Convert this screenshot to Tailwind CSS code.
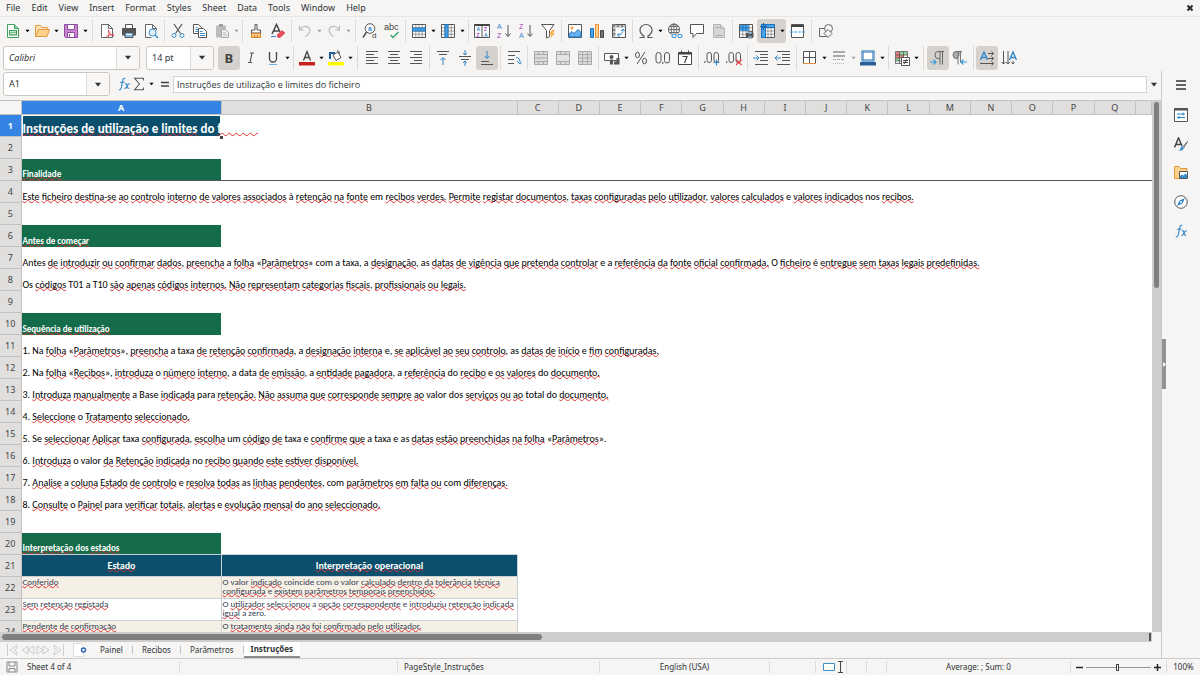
<!DOCTYPE html>
<html lang="pt-PT">
<head>
  <meta charset="UTF-8" />
  <title>Instruções - Calc</title>
  <meta name="viewport" content="width=device-width, initial-scale=1.0">
  <script src="https://cdn.jsdelivr.net/npm/@tailwindcss/browser@4"></script>
</head>
<body class="h-screen flex flex-col overflow-hidden bg-[#f6f5f4] text-[#2e3436] text-[9px] leading-3 font-['Noto_Sans',sans-serif]">

  <!-- Shared shapes -->
  <svg class="hidden">
    <symbol id="caret" viewBox="0 0 6 4"><path d="M0.5 0.5h5L3 3.5z" fill="currentColor"/></symbol>
    <symbol id="table" viewBox="0 0 16 16"><path d="M1 1.500h14v13H1z" fill="#fff"/><path d="M4.800 1.500v13M8 1.500v13M11.200 1.500v13M1.500 4.800h13M1.500 8h13M1.500 11.200h13" fill="none" stroke="#777" stroke-width=".7"/><path d="M1.500 1.500h13v13h-13z" fill="none" stroke="#555"/></symbol>
    <symbol id="fx" viewBox="0 0 16 16"><path d="M9.500 1.500C7.500 1 6.800 2.500 6.500 4.500L5 12c-.4 2-1.200 3-3 2.500M3.500 6h5M9 8c2-1 2 .5 2.500 2.500s1 3 2.500 2M14.500 8c-1.500-.5-2.500 1-3.200 2.500S9.500 13.500 8.500 13" fill="none" stroke="#2f86c8" stroke-width="1.300"/></symbol>
    <symbol id="merge" viewBox="0 0 16 16"><path d="M1.500 1.500h13v13h-13z" fill="#dcdcdc" stroke="#aaa"/><path d="M1.500 4.500h13M1.500 11.500h13M5.500 1.500v3M10.500 1.500v3M5.500 11.500v3M10.500 11.500v3M1.500 8h13" stroke="#aaa"/></symbol>
  </svg>

  <!-- Menu -->
  <header class="flex justify-between items-center h-[17px] border-b border-[#e6e5e3] px-1.5">
    <nav class="flex gap-[11px]">
      <button>File</button>
      <button>Edit</button>
      <button>View</button>
      <button>Insert</button>
      <button>Format</button>
      <button>Styles</button>
      <button>Sheet</button>
      <button>Data</button>
      <button>Tools</button>
      <button>Window</button>
      <button>Help</button>
    </nav>
    <button aria-label="Close"><svg class="size-2" viewBox="0 0 8 8"><path d="M1.500 1.500l5 5M6.500 1.500l-5 5" stroke="#222" stroke-width="1.800"/></svg></button>
  </header>

  <!-- Standard toolbar -->
  <div class="flex items-center h-[27px] pl-0.5 [&>button]:w-[22px] [&>button]:h-6 [&>button]:shrink-0 [&>button]:flex [&>button]:items-center [&>button]:justify-center [&_svg]:size-4 [&_svg]:overflow-visible [&_text]:font-['Liberation_Sans'] [&>.drop]:w-[7px] [&>.drop>svg]:w-[5px] [&>.drop>svg]:h-1 [&>.drop]:text-black [&>i]:w-px [&>i]:h-[22px] [&>i]:bg-[#dddbd9]" role="toolbar">
    <button aria-label="New"><svg viewBox="0 0 16 16"><path d="M2.500 1.500h7l4 4v9h-11z" fill="#fff" stroke="#3fa35b"/><path d="M9.500 1.500v4h4" fill="#8fd3a0" stroke="#3fa35b"/><path d="M4 7h8v5.500H4z" fill="#3fa35b"/><path d="M5 8.800h6M5 10.700h6" stroke="#fff"/></svg></button>
    <button class="drop" aria-label="New options"><svg><use href="#caret"/></svg></button>
    <button aria-label="Open"><svg viewBox="0 0 16 16"><path d="M1.500 13.500v-11h5l1.500 2h5.500v2" fill="#fce3b6" stroke="#e09a3e"/><path d="M1.500 13.500l3-7h11l-2.500 7z" fill="#fbd28b" stroke="#e09a3e"/></svg></button>
    <button class="drop" aria-label="Open options"><svg><use href="#caret"/></svg></button>
    <button aria-label="Save"><svg viewBox="0 0 16 16"><path d="M1.500 1.500h13v13h-12l-1-1z" fill="#c883d3" stroke="#8e4ca0"/><path d="M4.500 1.500h7v5h-7z" fill="#fff" stroke="#8e4ca0"/><path d="M4.500 9.500h7v5h-7z" fill="#fff" stroke="#8e4ca0"/><path d="M6.500 11v3" stroke="#8e4ca0"/></svg></button>
    <button class="drop" aria-label="Save options"><svg><use href="#caret"/></svg></button>
    <i class="mx-[3px]"></i>
    <button aria-label="Export as PDF"><svg viewBox="0 0 16 16"><path d="M2.500 1.500h7l4 4v9h-11z" fill="#fff" stroke="#666"/><path d="M9.500 1.500v4h4" fill="none" stroke="#666"/><path d="M9.500 7c.5 3 2 5 5.500 6M8 15c2-1 2.500-5 1.500-8M7.500 13.500c2-1.500 4-2 7.500-1.500" fill="none" stroke="#d94452"/></svg></button>
    <button aria-label="Print"><svg viewBox="0 0 16 16"><path d="M4.500 5v-3.500h7V5" fill="#fff" stroke="#555"/><path d="M1 5h14v7.500H1z" fill="#555"/><path d="M4 9.500h8v5H4z" fill="#7fb7e6" stroke="#555"/><path d="M5.500 11.500h5" stroke="#fff"/></svg></button>
    <button aria-label="Print Preview"><svg viewBox="0 0 16 16"><path d="M13.500 7V5.500l-4-4h-7v13h6" fill="#fff" stroke="#666"/><path d="M9.500 1.500v4h4" fill="none" stroke="#666"/><circle cx="9.500" cy="9.500" r="3.500" fill="#dceefb" stroke="#3a8fd0"/><path d="M12 12l3 3" stroke="#3a8fd0" stroke-width="1.500"/></svg></button>
    <i class="mx-0.5"></i>
    <button aria-label="Cut"><svg viewBox="0 0 16 16"><path d="M4 1l6.500 9.500M12 1L5.500 10.500" stroke="#555" stroke-width="1.200"/><circle cx="4" cy="12.500" r="2" fill="none" stroke="#3a8fd0"/><circle cx="12" cy="12.500" r="2" fill="none" stroke="#3a8fd0"/></svg></button>
    <button aria-label="Copy"><svg viewBox="0 0 16 16"><path d="M1.500 1.500h5l3 3v6h-8z" fill="#fff" stroke="#555"/><path d="M3.500 4.500h2M3.500 6.500h3M3.500 8.500h3" stroke="#3a8fd0"/><path d="M6.500 5.500h5l3 3v6h-8z" fill="#fff" stroke="#555"/><path d="M8 8.500h2.500M8 10.500h5M8 12.500h5" stroke="#3a8fd0"/></svg></button>
    <button aria-label="Paste"><svg viewBox="0 0 16 16"><path d="M2 2.500h10v12H2z" fill="#bbb"/><path d="M5 1h4v2.500H5z" fill="#999"/><path d="M7.500 6.500h4l3 3v5h-7z" fill="#eee" stroke="#aaa"/><path d="M9 10h3M9 12h4" stroke="#bbb"/></svg></button>
    <button class="drop opacity-35" aria-label="Paste options"><svg><use href="#caret"/></svg></button>
    <i class="mx-0.5"></i>
    <button aria-label="Clone Formatting"><svg viewBox="0 0 16 16"><path d="M7 1.500h2v5.500h3.500v3h-9V7H7z" fill="#fff" stroke="#555"/><path d="M3.500 10.500h9v4h-9z" fill="#fbd28b" stroke="#e07f1e"/><path d="M6.500 12v2.500M9.500 12v2.500" stroke="#e07f1e"/></svg></button>
    <button aria-label="Clear Direct Formatting"><svg viewBox="0 0 16 16"><path d="M2 11L6.500 1.500 10 9M3.700 8h5" fill="none" stroke="#444" stroke-width="1.500"/><path d="M1 13.500h5" stroke="#3a8fd0" stroke-width="1.200"/><path d="M7 12l5-4.500 3 2.500-5 4.500H8z" fill="#ea4b57" stroke="#d03543" stroke-width=".6"/></svg></button>
    <i class="mx-0.5"></i>
    <button aria-label="Undo"><svg viewBox="0 0 16 16"><path d="M2.500 2.500v4.500h4.500M2.500 7C5 3 9 2.500 11.500 4.500S13 11 8.500 13.500" fill="none" stroke="#bbb" stroke-width="1.200"/></svg></button>
    <button class="drop opacity-35" aria-label="Undo list"><svg><use href="#caret"/></svg></button>
    <button aria-label="Redo"><svg viewBox="0 0 16 16"><path d="M13.500 2.500v4.500H9M13.500 7C11 3 7 2.500 4.500 4.500S3 11 7.500 13.500" fill="none" stroke="#bbb" stroke-width="1.200"/></svg></button>
    <button class="drop opacity-35" aria-label="Redo list"><svg><use href="#caret"/></svg></button>
    <i class="mx-[3px]"></i>
    <button aria-label="Find and Replace"><svg viewBox="0 0 16 16"><circle cx="8" cy="5.500" r="4.800" fill="#fff" stroke="#555"/><path d="M4.500 9L1 14.500" stroke="#555" stroke-width="1.500"/><text x="6" y="8" font-size="7" font-weight="bold" fill="#3a8fd0">a</text><text x="10" y="15" font-size="8" fill="#444">d</text></svg></button>
    <button aria-label="Spelling"><svg viewBox="0 0 16 16"><text x="0" y="7" font-size="9" fill="#444">abc</text><path d="M6.500 12l2.500 2.500L14.500 9" fill="none" stroke="#2fa56a" stroke-width="1.300"/></svg></button>
    <i class="mx-0.5"></i>
    <button aria-label="Row"><svg viewBox="0 0 16 16"><use href="#table"/><path d="M1.500 5h13v3h-13z" fill="#4aa3e8" stroke="#1b74bd"/></svg></button>
    <button class="drop" aria-label="Row options"><svg><use href="#caret"/></svg></button>
    <button aria-label="Column"><svg viewBox="0 0 16 16"><use href="#table"/><path d="M5 1.500h3v13H5z" fill="#4aa3e8" stroke="#1b74bd"/></svg></button>
    <button class="drop" aria-label="Column options"><svg><use href="#caret"/></svg></button>
    <i class="mx-0.5"></i>
    <button aria-label="Sort"><svg viewBox="0 0 16 16"><path d="M.5 1.500h15v13H.5zM8 2v12.500" fill="#fff" stroke="#555"/><path d="M.5 2h15" stroke="#444" stroke-width="2"/><g font-size="5" font-weight="bold"><text x="2.500" y="8" fill="#2f86c8">A</text><text x="2.500" y="14" fill="#a342b8">Z</text><text x="10" y="8" fill="#a342b8">Z</text><text x="10" y="14" fill="#2f86c8">A</text></g></svg></button>
    <button aria-label="Sort Ascending"><svg viewBox="0 0 16 16"><text x="1" y="6" font-size="7" fill="#2f86c8">A</text><text x="1" y="15" font-size="7" fill="#a342b8">Z</text><path d="M12 2v11M9.500 10.500l2.500 3 2.500-3" fill="none" stroke="#555"/></svg></button>
    <button aria-label="Sort Descending"><svg viewBox="0 0 16 16"><text x="1" y="6" font-size="7" fill="#a342b8">Z</text><text x="1" y="15" font-size="7" fill="#2f86c8">A</text><path d="M12 2v11M9.500 10.500l2.500 3 2.500-3" fill="none" stroke="#555"/></svg></button>
    <button aria-label="AutoFilter"><svg viewBox="0 0 16 16"><path d="M1.500 1.500h12.500l-4.500 6v6l-3 1.500V7.500z" fill="#fff" stroke="#555"/><path d="M12 7l-3 4.500h2.500L10 15.500l5-5.500h-2.500L15 7z" fill="#f7ac45"/></svg></button>
    <i class="mx-0.5"></i>
    <button aria-label="Insert Image"><svg viewBox="0 0 16 16"><path d="M1.500 1.500h13v13h-13z" fill="#fff" stroke="#555"/><circle cx="5" cy="5" r="1.500" fill="#f2a13a"/><path d="M2 14V11l3-2.500 2 2L11 6.500 14 9.500V14z" fill="#69b1ec" stroke="#1b74bd"/></svg></button>
    <button aria-label="Insert Chart"><svg viewBox="0 0 16 16"><path d="M1.500 5.500h3v9h-3z" fill="#4aa3e8" stroke="#1b74bd"/><path d="M6.500 1.500h3v13h-3z" fill="#fbd28b" stroke="#e8913a"/><path d="M11.500 7.500h3v7h-3z" fill="#777" stroke="#444"/></svg></button>
    <button aria-label="Insert Pivot Table"><svg viewBox="0 0 16 16"><path d="M1.500 1.500h13v13h-13z" fill="#fff" stroke="#555"/><path d="M1.500 3.200h13M3.200 1.500v13" stroke="#888" stroke-width="2.500" stroke-dasharray="3 1"/><path d="M6.500 12c4 0 5.500-2 5.500-6M10 8l2-2 2 2M8.500 10l-2 2 2 2" fill="none" stroke="#2f86c8"/></svg></button>
    <i class="mx-0.5"></i>
    <button aria-label="Special Character"><svg viewBox="0 0 16 16"><path d="M1.500 14.500h4.500v-1.500C3.500 11.500 2 9.500 2 7a6 5.500 0 0 1 12 0c0 2.500-1.500 4.500-4 6v1.500h4.500" fill="none" stroke="#555" stroke-width="1.200"/></svg></button>
    <button class="drop" aria-label="Symbols"><svg><use href="#caret"/></svg></button>
    <button aria-label="Hyperlink"><svg viewBox="0 0 16 16"><circle cx="7" cy="6.500" r="5.500" fill="none" stroke="#555"/><path d="M1.500 6.500h11M7 1v11M2.500 3.500h9M2.500 9.500h9" stroke="#555" stroke-width=".8"/><ellipse cx="7" cy="6.500" rx="2.700" ry="5.500" fill="none" stroke="#555" stroke-width=".8"/><path d="M4.500 10.500h5v4h-5zM10.500 10.500h5v4h-5z" fill="#f6f5f4"/><path d="M9 11.500H6.500a1.500 1.500 0 0 0 0 3H9M11 11.500h2.500a1.500 1.500 0 0 1 0 3H11M8 13h4" fill="none" stroke="#3a9ae0" stroke-width="1.200"/></svg></button>
    <button aria-label="Comment"><svg viewBox="0 0 16 16"><path d="M1.500 1.500h13v9h-7L4 14.500v-4H1.500z" fill="#fff" stroke="#555"/></svg></button>
    <button aria-label="Headers and Footers"><svg viewBox="0 0 16 16"><path d="M2.500 1.500h7l4 4v9h-11z" fill="#d6d6d6" stroke="#b5b5b5"/><path d="M9.500 1.500v4h4" fill="none" stroke="#b5b5b5"/><path d="M4.500 4.500h4M4.500 12.500h7" stroke="#aaa"/></svg></button>
    <i class="mx-0.5"></i>
    <button aria-label="Print Area"><svg viewBox="0 0 16 16"><use href="#table"/><path d="M2 2h9v6H2z" fill="#4aa3e8"/><path d="M5 2v6M8 2v6M2 5h9" stroke="#1b74bd"/><path d="M8 10h7.500v4.500H8z" fill="#555"/><path d="M10 8.500h4V11h-4zM10 13h4v2h-4z" fill="#9bc9ef" stroke="#555" stroke-width=".7"/></svg></button>
    <button class="bg-[#d5d2ce] rounded-l-[3px]" aria-label="Freeze Rows and Columns"><svg viewBox="0 0 16 16"><use href="#table"/><path d="M1.500 1.500h13v3h-13zM1.500 1.500h4v13h-4z" fill="#4aa3e8" stroke="#1b74bd"/><path d="M3.500 0v7M0 3.500h7" stroke="#1666a8"/></svg></button>
    <button class="drop bg-[#d5d2ce] rounded-r-[3px]" aria-label="Freeze options"><svg><use href="#caret"/></svg></button>
    <button aria-label="Split Window"><svg viewBox="0 0 16 16"><path d="M2.500 1.500h12v13h-12z" fill="#fff" stroke="#555"/><path d="M2 2h13v2H2z" fill="#444"/><path d="M1 9h15" stroke="#3a9ae0" stroke-dasharray="3 1"/></svg></button>
    <i class="mx-[3px]"></i>
    <button aria-label="Show Draw Functions"><svg viewBox="0 0 16 16"><path d="M1.500 5.500h8v8h-8z" fill="none" stroke="#666"/><circle cx="10.500" cy="5.500" r="4" fill="#f6f5f4" stroke="#666"/><path d="M10 6.500l4 4-4 4-4-4z" fill="#f6f5f4" stroke="#666"/></svg></button>
  </div>

  <!-- Formatting toolbar -->
  <div class="flex items-center h-[27px] pl-[3px] [&>button]:w-[22px] [&>button]:h-6 [&>button]:shrink-0 [&>button]:flex [&>button]:items-center [&>button]:justify-center [&>button>svg]:size-4 [&>.drop]:w-[7px] [&>.drop>svg]:w-[5px] [&>.drop>svg]:h-1 [&>.drop]:text-black [&>i]:w-px [&>i]:h-6 [&>i]:bg-[#dddbd9]" role="toolbar">
    <div class="flex w-[137px] h-6 mr-1.5 bg-white border border-[#cdc7c2] rounded-[3px]">
      <input class="min-w-0 flex-1 pl-[5px] italic" value="Calibri" aria-label="Font Name">
      <button class="w-[23px] flex items-center justify-center border-l border-[#dcd9d6] bg-[#f8f7f6] rounded-r-[3px]" aria-label="Font list"><svg class="w-2 h-[5px]"><use href="#caret"/></svg></button>
    </div>
    <div class="flex w-[68px] h-6 mr-1 bg-white border border-[#cdc7c2] rounded-[3px]">
      <input class="min-w-0 flex-1 pl-[5px]" value="14 pt" aria-label="Font Size">
      <button class="w-[23px] flex items-center justify-center border-l border-[#dcd9d6] bg-[#f8f7f6] rounded-r-[3px]" aria-label="Size list"><svg class="w-2 h-[5px]"><use href="#caret"/></svg></button>
    </div>
    <button class="bg-[#d5d2ce] rounded-[3px]" aria-label="Bold"><svg viewBox="0 0 16 16"><text x="3.500" y="12.500" font-size="13" font-weight="bold" fill="#444">B</text></svg></button>
    <button aria-label="Italic"><svg viewBox="0 0 16 16"><path d="M7 3h4M5 12.500h4M9 3L7 12.500" stroke="#555" stroke-width="1.200"/></svg></button>
    <button aria-label="Underline"><svg viewBox="0 0 16 16"><path d="M4.500 2v6.500a3.500 3.500 0 0 0 7 0V2" fill="none" stroke="#444" stroke-width="1.300"/><path d="M4 14.500h8" stroke="#6cb0e6"/></svg></button>
    <button class="drop" aria-label="Underline styles"><svg><use href="#caret"/></svg></button>
    <i class="mx-0.5"></i>
    <button aria-label="Font Color"><svg viewBox="0 0 16 16"><path d="M4.500 10.500L8 1.500l3.500 9M5.700 7.500h4.600" fill="none" stroke="#444" stroke-width="1.300"/><path d="M0 12h16v3.500H0z" fill="#c9211e"/></svg></button>
    <button class="drop" aria-label="Font colors"><svg><use href="#caret"/></svg></button>
    <button aria-label="Background Color"><svg viewBox="0 0 16 16"><path d="M5 5l5-3 3 5.500-5 3z" fill="#fff" stroke="#555"/><path d="M2 9V3h5" fill="none" stroke="#1b5f9e" stroke-width="2"/><path d="M9 1.500c1-1.500 3-.5 2 2.500" fill="none" stroke="#555"/><path d="M0 12h16v3.500H0z" fill="#ff0"/></svg></button>
    <button class="drop" aria-label="Background colors"><svg><use href="#caret"/></svg></button>
    <i class="mx-[3px]"></i>
    <button aria-label="Align Left"><svg viewBox="0 0 16 16"><path d="M2 1.500h12M2 4.500h8M2 7.500h12M2 10.500h8M2 13.500h12" stroke="#555"/></svg></button>
    <button aria-label="Center Horizontally"><svg viewBox="0 0 16 16"><path d="M2 1.500h12M4 4.500h8M2 7.500h12M4 10.500h8M2 13.500h12" stroke="#555"/></svg></button>
    <button aria-label="Align Right"><svg viewBox="0 0 16 16"><path d="M2 1.500h12M6 4.500h8M2 7.500h12M6 10.500h8M2 13.500h12" stroke="#555"/></svg></button>
    <i class="mx-0.5"></i>
    <button aria-label="Align Top"><svg viewBox="0 0 16 16"><path d="M2 1.500h12M4 4.500h8" stroke="#555"/><path d="M8 15V8M5.500 10L8 7.500 10.500 10" fill="none" stroke="#2f86c8"/></svg></button>
    <button aria-label="Center Vertically"><svg viewBox="0 0 16 16"><path d="M2 6.500h12M4 9.500h8" stroke="#555"/><path d="M8 0v5M6 3l2 2 2-2M8 16v-5M6 13l2-2 2 2" fill="none" stroke="#2f86c8"/></svg></button>
    <button class="bg-[#d5d2ce] rounded-[3px]" aria-label="Align Bottom"><svg viewBox="0 0 16 16"><path d="M2 11.500h8M2 14.500h12" stroke="#555"/><path d="M8 1v7M5.500 6L8 8.500 10.500 6" fill="none" stroke="#2f86c8"/></svg></button>
    <i class="mx-0.5"></i>
    <button aria-label="Wrap Text"><svg viewBox="0 0 16 16"><path d="M2 1.500h12M2 5.500h7M2 9.500h6M2 13.500h6" stroke="#555"/><path d="M10 7.500c2.500 0 4 1.500 4 4.500M11 11l3 3 2-2.500" fill="none" stroke="#2f86c8"/></svg></button>
    <i class="mx-0.5"></i>
    <button aria-label="Merge and Center"><svg><use href="#merge"/></svg></button>
    <button aria-label="Merge Cells"><svg viewBox="0 0 16 16"><use href="#merge"/><path d="M2 5h12v6H2z" fill="#e4e4e4"/></svg></button>
    <button aria-label="Unmerge Cells"><svg viewBox="0 0 16 16"><use href="#merge"/><path d="M5.500 4.500v7M10.500 4.500v7" stroke="#aaa"/></svg></button>
    <i class="mx-0.5"></i>
    <button aria-label="Format as Currency"><svg viewBox="0 0 16 16"><path d="M.5 3.500h14v7H.5z" fill="#fff" stroke="#555"/><circle cx="7.500" cy="7" r="2" fill="#555"/><path d="M6 9.500h3v5H6zM10 11.500h3v3h-3zM12.500 8h3v6.500h-3z" fill="#555"/></svg></button>
    <button class="drop" aria-label="Currency list"><svg><use href="#caret"/></svg></button>
    <button aria-label="Format as Percent"><svg viewBox="0 0 16 16"><path d="M12 2L4 14" stroke="#555"/><ellipse cx="4.500" cy="5" rx="2" ry="2.800" fill="none" stroke="#555"/><ellipse cx="11.500" cy="11" rx="2" ry="2.800" fill="none" stroke="#555"/></svg></button>
    <button aria-label="Format as Number"><svg viewBox="0 0 16 16"><rect x="1" y="2.500" width="5" height="10.500" rx="2.500" fill="none" stroke="#555"/><rect x="9.500" y="2.500" width="5" height="10.500" rx="2.500" fill="none" stroke="#555"/><path d="M7.800 12v2" stroke="#555"/></svg></button>
    <button aria-label="Format as Date"><svg viewBox="0 0 16 16"><path d="M1.500 2.500h13v12h-13z" fill="#fff" stroke="#444"/><path d="M1.500 3.500h13" stroke="#444" stroke-width="2"/><path d="M4.500 .5v2M11.500 .5v2" stroke="#444"/><path d="M5.500 6.500h4.500L7.500 13" fill="none" stroke="#444" stroke-width="1.200"/></svg></button>
    <i class="mx-0.5"></i>
    <button aria-label="Add Decimal Place"><svg viewBox="0 0 16 16"><path d="M.8 11v2" stroke="#555"/><rect x="3" y="2.500" width="4.500" height="10" rx="2.200" fill="none" stroke="#555"/><rect x="10" y="2.500" width="4.500" height="10" rx="2.200" fill="none" stroke="#555"/><path d="M9.500 12.500h6M12.500 9.500v6" stroke="#2f86c8" stroke-width="1.200"/></svg></button>
    <button aria-label="Delete Decimal Place"><svg viewBox="0 0 16 16"><path d="M.8 11v2" stroke="#555"/><rect x="3" y="2.500" width="4.500" height="10" rx="2.200" fill="none" stroke="#555"/><rect x="10" y="2.500" width="4.500" height="10" rx="2.200" fill="none" stroke="#555"/><path d="M10 9.500l5.500 5.500M15.500 9.500L10 15" stroke="#e0424d" stroke-width="1.200"/></svg></button>
    <i class="mx-0.5"></i>
    <button aria-label="Increase Indent"><svg viewBox="0 0 16 16"><path d="M2 1.500h13M7 4.500h8M7 7.500h8M7 10.500h8M2 14.500h13" stroke="#555"/><path d="M0 8h6M3.500 5.500L6 8l-2.500 2.500" fill="none" stroke="#2f86c8"/></svg></button>
    <button aria-label="Decrease Indent"><svg viewBox="0 0 16 16"><path d="M2 1.500h13M7 4.500h8M7 7.500h8M7 10.500h8M2 14.500h13" stroke="#555"/><path d="M6 8H0M2.500 5.500L0 8l2.500 2.500" fill="none" stroke="#2f86c8"/></svg></button>
    <i class="mx-0.5"></i>
    <button aria-label="Borders"><svg viewBox="0 0 16 16"><path d="M1.500 1.500h12v12h-12zM7.500 1.500v12M1.500 7.500h12" fill="#fff" stroke="#555"/><path d="M1 13.500h13" stroke="#e8913a"/></svg></button>
    <button class="drop" aria-label="Border list"><svg><use href="#caret"/></svg></button>
    <button aria-label="Border Style"><svg viewBox="0 0 16 16"><path d="M2 2h12M2 6h12" stroke="#aaa" stroke-width="2"/><path d="M2 9.500h12" stroke="#aaa" stroke-dasharray="3 1"/><path d="M2 13.500h12" stroke="#bbb" stroke-dasharray="1 1"/></svg></button>
    <button class="drop opacity-35" aria-label="Border styles"><svg><use href="#caret"/></svg></button>
    <button aria-label="Border Color"><svg viewBox="0 0 16 16"><path d="M2.500 1.500h11v9h-11z" fill="#fff" stroke="#2a6099" stroke-width="2"/><path d="M2.500 1.500h11v9h-11z" fill="none" stroke="#6ab0e8"/><path d="M0 12h16v3.500H0z" fill="#2a6099"/></svg></button>
    <button class="drop" aria-label="Border colors"><svg><use href="#caret"/></svg></button>
    <i class="mx-0.5"></i>
    <button aria-label="Conditional Formatting"><svg viewBox="0 0 16 16"><path d="M1.500 1.500h12v12h-12z" fill="#fff"/><path d="M2 2h4v3H2zM2 5h8v3H2z" fill="#ee7a7f"/><path d="M6 2h7v3H6zM2 8h4v3H2z" fill="#8ed69c"/><path d="M1.500 1.500h12v12h-12zM5.500 1.500v12M9.500 1.500v12M1.500 5h12M1.500 8h12M1.500 11h12" fill="none" stroke="#555" stroke-width=".8"/><path d="M7.500 7.500h8v8h-8z" fill="#fff" stroke="#555"/><path d="M9 10.500h5M9 12.500h5M13 9l-3 5" stroke="#444"/></svg></button>
    <button class="drop" aria-label="Conditional list"><svg><use href="#caret"/></svg></button>
    <i class="mx-[3px]"></i>
    <button class="bg-[#d5d2ce] rounded-[3px]" aria-label="Left-To-Right"><svg viewBox="0 0 16 16"><path d="M14 1.500H8a3 3.500 0 0 0 0 7h2M10 1.500v13M12.500 1.500v13" fill="none" stroke="#666"/><path d="M0 12h6M3.500 9.500L6 12l-2.500 2.500" fill="none" stroke="#3a9ae0" stroke-width="1.200"/></svg></button>
    <button aria-label="Right-To-Left"><svg viewBox="0 0 16 16"><path d="M10 1.500H4a3 3.500 0 0 0 0 7h2z" fill="#aaa"/><path d="M10 1.500H4a3 3.500 0 0 0 0 7h2M6 1.500v13M8.500 1.500v11" fill="none" stroke="#777"/><path d="M15 12H9M11.500 9.500L9 12l2.500 2.500" fill="none" stroke="#3a9ae0" stroke-width="1.200"/></svg></button>
    <i class="mx-0.5"></i>
    <button class="bg-[#d5d2ce] rounded-[3px]" aria-label="Text left to right"><svg viewBox="0 0 16 16"><path d="M1.500 10L5 2l3.500 8M2.700 7.500h4.600" fill="none" stroke="#2f86c8" stroke-width="1.400"/><path d="M9 3.500h5M12.500 1.500l2 2-2 2M9 8.500h5M12.500 6.500l2 2-2 2M1 13.500h13M12.500 11.500l2 2-2 2" fill="none" stroke="#555"/></svg></button>
    <button aria-label="Text top to bottom"><svg viewBox="0 0 16 16"><path d="M8.500 10L12 2l3.500 8M9.700 7.500h4.600" fill="none" stroke="#2f86c8" stroke-width="1.400"/><path d="M2.500 1v13M.5 12l2 2 2-2M7 1v13M5 12l2 2 2-2M12 11v3M10.500 12.500l1.500 1.500 1.500-1.500" fill="none" stroke="#555"/></svg></button>
  </div>

  <div class="flex flex-1 min-h-0">
    <div class="flex flex-col flex-1 min-w-0">

      <!-- Formula bar -->
      <div class="flex items-center h-[26px] mb-[3px] pl-[3px]">
        <div class="flex w-[107px] h-6 bg-white border border-[#cdc7c2] rounded-[3px]">
          <input class="min-w-0 flex-1 pl-[5px]" value="A1" aria-label="Name Box">
          <button class="w-[23px] flex items-center justify-center border-l border-[#dcd9d6] bg-[#f8f7f6] rounded-r-[3px]" aria-label="Names"><svg class="w-2 h-[5px]"><use href="#caret"/></svg></button>
        </div>
        <button class="ml-[7px]" aria-label="Function Wizard"><svg class="size-[14px]"><use href="#fx"/></svg></button>
        <button class="ml-[1px]" aria-label="Select Function"><svg class="size-[14px]" viewBox="0 0 16 16"><path d="M13 4V1.500H3L8.500 8 3 14.500h10V12" fill="none" stroke="#555" stroke-width="1.200"/></svg></button>
        <button class="w-[11px] flex justify-center text-black" aria-label="Functions"><svg class="w-[5px] h-1"><use href="#caret"/></svg></button>
        <button class="px-[3px]" aria-label="Formula"><svg class="w-[10px] h-2" viewBox="0 0 10 8"><path d="M1 2.500h8M1 6h8" stroke="#444" stroke-width="1.400"/></svg></button>
        <input class="flex-1 min-w-0 h-[17px] bg-white border border-[#d5d2cf] px-[3px] font-['Open_Sans',sans-serif]" value="Instruções de utilização e limites do ficheiro" aria-label="Formula input">
        <button class="w-[14px] flex justify-center" aria-label="Expand Formula Bar"><svg class="w-2 h-[5px]"><use href="#caret"/></svg></button>
      </div>

      <!-- Sheet -->
      <div class="flex flex-1 min-h-0">
        <div class="flex-1 min-w-0 overflow-hidden bg-white">
          <table class="w-full table-fixed border-collapse [&_tr]:h-[22px] [&_td]:p-0 [&_td]:pl-px [&_td]:align-bottom [&_td]:whitespace-nowrap [&_td]:font-[Carlito,Lato,sans-serif] [&_td]:text-[10px] [&_td]:text-black [&_th]:text-[#444] [&_tbody_th]:p-0 [&_tbody_th]:font-normal [&_tbody_th]:bg-[#e0dfde] [&_tbody_th]:border-r [&_tbody_th]:border-b [&_tbody_th]:border-[#c4c2c0] [&_u]:decoration-wavy [&_u]:decoration-[#e03030] [&_u]:decoration-1 [&_u]:[text-decoration-skip-ink:none] [&_u]:-underline-offset-1">
            <colgroup>
              <col class="w-[21px]"><col class="w-[200px]"><col class="w-[296px]">
              <col span="15"><col class="w-4">
            </colgroup>
            <thead>
              <tr class="h-[14px]! [&>th]:p-0 [&>th]:h-[14px] [&>th]:font-normal [&>th]:leading-3 [&>th]:bg-[#e0dfde] [&>th]:border-r [&>th]:border-y [&>th]:border-[#c4c2c0]">
                <th class="bg-[#f6f5f4]!"></th>
                <th class="bg-[#3584e4]! text-white! font-bold!">A</th><th>B</th><th>C</th><th>D</th><th>E</th><th>F</th><th>G</th><th>H</th><th>I</th><th>J</th><th>K</th><th>L</th><th>M</th><th>N</th><th>O</th><th>P</th><th>Q</th><th></th>
              </tr>
            </thead>
            <tbody>
              <tr>
                <th class="bg-[#3584e4]! text-white! font-bold!">1</th>
                <td class="bg-[#0b4f6c] text-white! text-[13px]! font-bold leading-4 relative shadow-[1px_1px_0_#444,inset_0_0_0_1px_#fff]"><u>Instruções</u> <u>de</u> <u>utilização</u> e <u>limites</u> do <u>ficheiro</u><span class="absolute -right-0.5 -bottom-0.5 size-[3px] bg-[#444]"></span></td>
              </tr>
              <tr><th>2</th></tr>
              <tr class="border-b border-[#555]"><th>3</th><td class="bg-[#146c4a] text-white! text-[9px]! font-bold"><u>Finalidade</u></td></tr>
              <tr><th>4</th><td><u>Este</u> <u>ficheiro</u> <u>destina-se</u> <u>ao</u> <u>controlo</u> <u>interno</u> <u>de</u> <u>valores</u> <u>associados</u> à <u>retenção</u> <u>na</u> <u>fonte</u> em <u>recibos</u> <u>verdes.</u> <u>Permite</u> <u>registar</u> <u>documentos</u>, <u>taxas</u> <u>configuradas</u> <u>pelo</u> <u>utilizador</u>, <u>valores</u> <u>calculados</u> e <u>valores</u> <u>indicados</u> nos <u>recibos.</u></td></tr>
              <tr><th>5</th></tr>
              <tr><th>6</th><td class="bg-[#146c4a] text-white! text-[9px]! font-bold"><u>Antes</u> de <u>começar</u></td></tr>
              <tr><th>7</th><td>Antes <u>de</u> <u>introduzir</u> <u>ou</u> <u>confirmar</u> <u>dados</u>, <u>preencha</u> a <u>folha</u> «<u>Parâmetros</u>» com a taxa, a <u>designação</u>, as <u>datas</u> <u>de</u> <u>vigência</u> <u>que</u> <u>pretenda</u> <u>controlar</u> e a <u>referência</u> <u>da</u> <u>fonte</u> <u>oficial</u> <u>confirmada.</u> O <u>ficheiro</u> é <u>entregue</u> <u>sem</u> <u>taxas</u> <u>legais</u> <u>predefinidas.</u></td></tr>
              <tr><th>8</th><td>Os <u>códigos</u> T01 a T10 <u>são</u> <u>apenas</u> <u>códigos</u> <u>internos.</u> <u>Não</u> <u>representam</u> <u>categorias</u> <u>fiscais</u>, <u>profissionais</u> <u>ou</u> <u>legais.</u></td></tr>
              <tr><th>9</th></tr>
              <tr><th>10</th><td class="bg-[#146c4a] text-white! text-[9px]! font-bold"><u>Sequência</u> <u>de</u> <u>utilização</u></td></tr>
              <tr><th>11</th><td>1. Na <u>folha</u> «<u>Parâmetros</u>», <u>preencha</u> a taxa <u>de</u> <u>retenção</u> <u>confirmada</u>, a <u>designação</u> <u>interna</u> e, <u>se</u> <u>aplicável</u> <u>ao</u> <u>seu</u> <u>controlo</u>, as <u>datas</u> <u>de</u> <u>início</u> e <u>fim</u> <u>configuradas.</u></td></tr>
              <tr><th>12</th><td>2. Na <u>folha</u> «<u>Recibos</u>», <u>introduza</u> o <u>número</u> <u>interno</u>, a data <u>de</u> <u>emissão</u>, a <u>entidade</u> <u>pagadora</u>, a <u>referência</u> do <u>recibo</u> e <u>os</u> <u>valores</u> do <u>documento.</u></td></tr>
              <tr><th>13</th><td>3. <u>Introduza</u> <u>manualmente</u> a Base <u>indicada</u> para <u>retenção.</u> <u>Não</u> <u>assuma</u> <u>que</u> <u>corresponde</u> <u>sempre</u> <u>ao</u> valor dos <u>serviços</u> <u>ou</u> <u>ao</u> total do <u>documento.</u></td></tr>
              <tr><th>14</th><td>4. <u>Seleccione</u> o <u>Tratamento</u> <u>seleccionado.</u></td></tr>
              <tr><th>15</th><td>5. Se <u>seleccionar</u> <u>Aplicar</u> taxa <u>configurada</u>, <u>escolha</u> um <u>código</u> <u>de</u> taxa e <u>confirme</u> <u>que</u> a taxa e as <u>datas</u> <u>estão</u> <u>preenchidas</u> <u>na</u> <u>folha</u> «<u>Parâmetros</u>».</td></tr>
              <tr><th>16</th><td>6. <u>Introduza</u> o valor <u>da</u> <u>Retenção</u> <u>indicada</u> no <u>recibo</u> <u>quando</u> <u>este</u> <u>estiver</u> <u>disponível.</u></td></tr>
              <tr><th>17</th><td>7. <u>Analise</u> a <u>coluna</u> <u>Estado</u> <u>de</u> <u>controlo</u> e <u>resolva</u> <u>todas</u> as <u>linhas</u> <u>pendentes</u>, com <u>parâmetros</u> <u>em</u> <u>falta</u> <u>ou</u> com <u>diferenças.</u></td></tr>
              <tr><th>18</th><td>8. <u>Consulte</u> o <u>Painel</u> para <u>verificar</u> <u>totais</u>, <u>alertas</u> e <u>evolução</u> <u>mensal</u> do <u>ano</u> <u>seleccionado.</u></td></tr>
              <tr><th>19</th></tr>
              <tr><th>20</th><td class="bg-[#146c4a] text-white! text-[9px]! font-bold"><u>Interpretação</u> dos <u>estados</u></td></tr>
              <tr class="[&>td]:bg-[#0b4f6c] [&>td]:border [&>td]:border-[#c9d1d6] [&>td]:text-white! [&>td]:font-bold [&>td]:text-center [&>td]:align-middle!"><th>21</th><td><u>Estado</u></td><td><u>Interpretação</u> <u>operacional</u></td></tr>
              <tr class="[&>td]:bg-[#f5f0e6] [&>td]:border [&>td]:border-[#c9d1d6] [&>td]:text-[#374151]! [&>td]:text-[9px]! [&>td]:leading-[9px] [&>td]:align-top! [&>td]:whitespace-normal!"><th>22</th><td><u>Conferido</u></td><td>O valor <u>indicado</u> coincide com o valor <u>calculado</u> <u>dentro</u> <u>da</u> <u>tolerância</u> <u>técnica</u> <u>configurada</u> e <u>existem</u> <u>parâmetros</u> <u>temporais</u> <u>preenchidos.</u></td></tr>
              <tr class="[&>td]:border [&>td]:border-[#c9d1d6] [&>td]:text-[#374151]! [&>td]:text-[9px]! [&>td]:leading-[9px] [&>td]:align-top! [&>td]:whitespace-normal!"><th>23</th><td><u>Sem</u> <u>retenção</u> <u>registada</u></td><td>O <u>utilizador</u> <u>seleccionou</u> a <u>opção</u> <u>correspondente</u> e <u>introduziu</u> <u>retenção</u> <u>indicada</u> <u>igual</u> a zero.</td></tr>
              <tr class="[&>td]:bg-[#f5f0e6] [&>td]:border [&>td]:border-[#c9d1d6] [&>td]:text-[#374151]! [&>td]:text-[9px]! [&>td]:leading-[9px] [&>td]:align-top! [&>td]:whitespace-normal!"><th>24</th><td><u>Pendente</u> <u>de</u> <u>confirmação</u></td><td>O <u>tratamento</u> <u>ainda</u> <u>não</u> <u>foi</u> <u>confirmado</u> <u>pelo</u> <u>utilizador.</u></td></tr>
            </tbody>
          </table>
        </div>
        <div class="w-[9px] bg-[#cdcdcd] pt-0.5 px-0.5"><div class="w-[5px] h-[35%] bg-[#7f7f7f] rounded-full"></div></div>
      </div>

      <!-- Horizontal scroll and sheet tabs -->
      <div class="flex items-center h-[10px] mr-[9px] bg-[#cdcdcd] pl-0.5 pr-px justify-between">
        <div class="w-[47%] h-1.5 bg-[#7f7f7f] rounded-full"></div>
        <div class="w-0.5 h-2 bg-[#555]"></div>
      </div>
      <div class="flex items-stretch h-4 text-[8px] leading-[14px]">
        <div class="flex items-center gap-px pl-1.5 text-[#cfcdcb]">
          <button aria-label="First sheet"><svg class="w-[14px] h-3" viewBox="0 0 14 12"><path d="M1.500 0v12M11 1L4 6l7 5V8L8 6l3-2z" fill="none" stroke="currentColor"/></svg></button>
          <button aria-label="Previous sheet"><svg class="w-[14px] h-3" viewBox="0 0 14 12"><path d="M7 2L1 6l6 4zM13 2L7 6l6 4z" fill="none" stroke="currentColor"/></svg></button>
          <button aria-label="Next sheet"><svg class="w-[14px] h-3" viewBox="0 0 14 12"><path d="M1 2l6 4-6 4zM7 2l6 4-6 4z" fill="none" stroke="currentColor"/></svg></button>
          <button aria-label="Last sheet"><svg class="w-[14px] h-3" viewBox="0 0 14 12"><path d="M12.500 0v12M3 1l7 5-7 5V8l3-2-3-2z" fill="none" stroke="currentColor"/></svg></button>
        </div>
        <button class="ml-2 mr-1" aria-label="Add sheet"><svg class="w-[14px] h-[14px]" viewBox="0 0 14 14"><path d="M.5 .5h7l3 3v10H.5z" fill="#fff" stroke="#ddd"/><circle cx="10.500" cy="7" r="2" fill="#fff" stroke="#2a65b8" stroke-width="1.400"/></svg></button>
        <div class="flex items-stretch [&>button]:px-[9px] [&>i]:w-px [&>i]:h-2 [&>i]:self-center [&>i]:bg-[#c4c2c0]">
          <button>Painel</button><i></i>
          <button>Recibos</button><i></i>
          <button>Parâmetros</button><i></i>
          <button class="bg-white font-bold border-b-2 border-[#8b8e8b] px-[7px]!">Instruções</button>
        </div>
      </div>
    </div>

    <!-- Sidebar -->
    <aside class="w-[39px] border-l border-[#cdcbc9] relative flex flex-col items-center gap-[15px] pt-[7px] [&_svg]:size-[14px]">
      <button class="mb-px" aria-label="Sidebar Settings"><svg viewBox="0 0 14 14"><path d="M2 3h10M2 7h10M2 11h10" stroke="#333" stroke-width="1.500"/></svg></button>
      <button aria-label="Properties"><svg viewBox="0 0 14 14"><path d="M.5 .5h13v13H.5z" fill="#fff" stroke="#555"/><path d="M0 1.500h14" stroke="#555" stroke-width="2"/><path d="M3 6h8M9 4.500V7.500M3 9.500h8M5 8v3" stroke="#2f86c8"/></svg></button>
      <button aria-label="Styles"><svg viewBox="0 0 14 14"><path d="M.5 10.500L4.500 1l3.500 8M2 7.500h4.500" fill="none" stroke="#444" stroke-width="1.500"/><path d="M13.500 4.500L9 9.500l1 1z" fill="#fff" stroke="#666"/><path d="M9.500 10c-1-1-3 0-3 1.500S5 13 4 13.500c3 .5 6 0 5.500-3.500z" fill="#2f86c8"/></svg></button>
      <button aria-label="Gallery"><svg viewBox="0 0 14 14"><path d="M.5 12.500v-12h4.500l1.500 2h6.500v10z" fill="#fbd28b" stroke="#e09a3e"/><path d="M5.500 5.500h8v7h-8z" fill="#fff" stroke="#555"/><path d="M6 12V10l2-1.500 1.500 1L11.500 7.500 13 9v3z" fill="#3a8fd0"/></svg></button>
      <button aria-label="Navigator"><svg viewBox="0 0 14 14"><circle cx="7" cy="7" r="6.300" fill="#fff" stroke="#555"/><path d="M11 3L8.500 8.500 3 11l2.500-5.500z" fill="#2f86c8"/><circle cx="7" cy="7" r="1" fill="#fff"/></svg></button>
      <button aria-label="Functions"><svg><use href="#fx"/></svg></button>
      <button class="absolute left-0 top-[268px] w-1 h-[50px] bg-[#929292] flex items-center justify-center" aria-label="Hide sidebar"><svg class="w-[3px]! h-[5px]!" viewBox="0 0 3 5"><path d="M0 0l3 2.500L0 5z" fill="#fff"/></svg></button>
    </aside>
  </div>

  <!-- Status bar -->
  <footer class="grid grid-cols-[180px_218px_1fr_170px_46px_31px_20px_20px_184px_96px_33px] items-center h-[17px] border-t border-[#cdcbc9] text-[8px] [&>div]:h-3 [&>div]:border-r [&>div]:border-[#dddbd9] [&>div]:flex [&>div]:items-center">
    <div class="pl-1.5 gap-[9px]"><svg class="size-3" viewBox="0 0 12 12"><path d="M1 1h10v10H1zM3 1v4h6V1M3 11V7.500h6V11" fill="none" stroke="#888"/></svg>Sheet 4 of 4</div>
    <div></div>
    <div class="pl-1.5">PageStyle_Instruções</div>
    <div class="justify-center">English (USA)</div>
    <div></div>
    <div class="pl-[7px] gap-[3px]"><svg class="w-3 h-2" viewBox="0 0 12 8"><path d="M.5 .5h11v7H.5z" fill="#fff" stroke="#3a8fc8"/></svg><svg class="w-[5px] h-3" viewBox="0 0 5 12"><path d="M0 .5h5M0 11.500h5M2.500 .5v11" stroke="#444"/></svg></div>
    <div></div>
    <div></div>
    <div class="justify-center">Average: ; Sum: 0</div>
    <div class="justify-center gap-[3px]">
      <button aria-label="Zoom out"><svg class="size-[7px]" viewBox="0 0 7 7"><path d="M0 3.500h7" stroke="#222" stroke-width="1.500"/></svg></button>
      <input type="range" aria-label="Zoom" value="49" class="w-[65px] h-2 appearance-none bg-transparent [&::-webkit-slider-runnable-track]:h-px [&::-webkit-slider-runnable-track]:bg-[#999] [&::-webkit-slider-thumb]:appearance-none [&::-webkit-slider-thumb]:w-[3px] [&::-webkit-slider-thumb]:h-[7px] [&::-webkit-slider-thumb]:-mt-[3px] [&::-webkit-slider-thumb]:bg-white [&::-webkit-slider-thumb]:border [&::-webkit-slider-thumb]:border-[#444]">
      <button aria-label="Zoom in"><svg class="size-[7px]" viewBox="0 0 7 7"><path d="M0 3.500h7M3.500 0v7" stroke="#222" stroke-width="1.500"/></svg></button>
    </div>
    <span class="text-center">100%</span>
  </footer>
</body>
</html>
